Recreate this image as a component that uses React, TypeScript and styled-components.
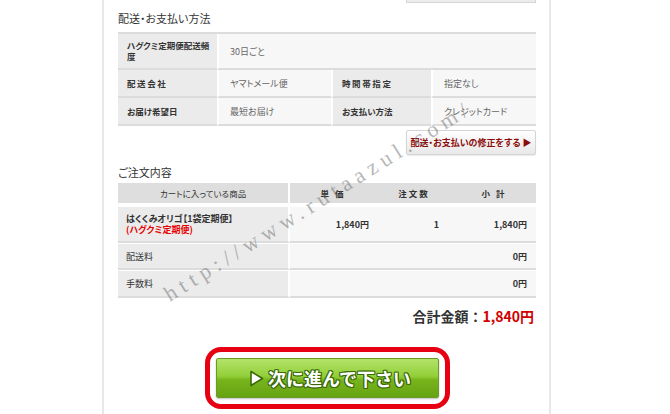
import styled, { createGlobalStyle } from 'styled-components';

const GlobalStyle = createGlobalStyle`
  html, body {
    margin: 0;
    padding: 0;
    background: #fff;
  }
  body {
    font-family: "Noto Sans CJK JP", "Noto Sans", sans-serif;
    color: #333;
    font-feature-settings: "palt";
  }
`;

const Page = styled.div`
  position: relative;
  width: 670px;
  height: 414px;
  overflow: hidden;
`;

const Panel = styled.div`
  box-sizing: border-box;
  margin-left: 102px;
  width: 449px;
  height: 100%;
  border-left: 2px solid #e8e8e8;
  border-right: 2px solid #e8e8e8;
  padding: 0 13px 0 14px;
  display: flex;
  flex-direction: column;
`;

const CutButton = styled.div`
  align-self: flex-end;
  box-sizing: border-box;
  width: 130px;
  height: 3px;
  background: #ececec;
  border: 1px solid #d6d6d6;
  border-top: none;
`;

const SectionTitle = styled.h2`
  margin: 8px 0 7px;
  font-size: 11px;
  line-height: 14px;
  font-weight: normal;
  color: #333;
`;

const InfoGrid = styled.div`
  display: grid;
  grid-template-columns: 99px 114px 100px 105px;
  grid-template-rows: 36px 28px 28px;
  border-top: 2px solid #dcdcdc;
`;

const Cell = styled.div<{ $label?: boolean; $span?: number; $first?: boolean }>`
  box-sizing: border-box;
  grid-column: ${({ $span }) => ($span ? `span ${$span}` : 'auto')};
  display: flex;
  align-items: center;
  padding: 0 6px 0 ${({ $label }) => ($label ? '9px' : '11px')};
  background: ${({ $label }) => ($label ? '#ebebeb' : '#f7f7f7')};
  border-bottom: 2px solid #dcdcdc;
  border-left: ${({ $first }) => ($first ? 'none' : '2px solid #fff')};
  font-size: ${({ $label }) => ($label ? '8.5px' : '9px')};
  font-weight: ${({ $label }) => ($label ? 'bold' : 'normal')};
  color: ${({ $label }) => ($label ? '#333' : '#666')};
  line-height: 11px;
`;

const Spaced = styled.span`
  letter-spacing: 1.6px;
`;

const NoWrap = styled.span`
  white-space: nowrap;
`;

const FixButton = styled.button`
  align-self: flex-end;
  box-sizing: border-box;
  margin-top: 4px;
  width: 130px;
  height: 25px;
  padding: 0;
  border: 1px solid #d4d4d4;
  border-radius: 2px;
  background: linear-gradient(#ffffff, #e8e8e8);
  box-shadow: 0 1px 1px rgba(0, 0, 0, 0.08);
  font-family: inherit;
  font-feature-settings: "palt";
  font-size: 9px;
  font-weight: bold;
  color: #8c0c0c;
  cursor: pointer;
`;

const OrderTitle = styled(SectionTitle)`
  margin: 10px 0 4px;
`;

const OrderGrid = styled.div`
  display: grid;
  grid-template-columns: 172px 86px 76px 84px;
  grid-template-rows: 23px 37px 27px 28px;
`;

const HeadCell = styled.div<{ $first?: boolean; $bold?: boolean }>`
  box-sizing: border-box;
  display: flex;
  align-items: center;
  justify-content: center;
  background: #dedede;
  border-bottom: 3px solid #fff;
  border-right: ${({ $first }) => ($first ? '2px solid #fff' : 'none')};
  font-size: 8.5px;
  font-weight: ${({ $bold }) => ($bold ? 'bold' : 'normal')};
  letter-spacing: ${({ $bold }) => ($bold ? '2px' : '0')};
  color: #333;
`;

const BodyCell = styled.div<{ $label?: boolean; $span?: number; $pr?: number }>`
  box-sizing: border-box;
  grid-column: ${({ $span }) => ($span ? `span ${$span}` : 'auto')};
  display: flex;
  flex-direction: column;
  justify-content: center;
  align-items: ${({ $label }) => ($label ? 'flex-start' : 'flex-end')};
  padding: 0 ${({ $pr }) => $pr ?? 9}px 0 8px;
  background: ${({ $label }) => ($label ? '#ebebeb' : '#f7f7f7')};
  border-top: 1px solid #fff;
  border-bottom: 2px solid #dcdcdc;
  border-right: ${({ $label }) => ($label ? '2px solid #fff' : 'none')};
  font-size: 9px;
  line-height: 11px;
  font-weight: bold;
  color: #333;
`;

const PlainLabel = styled.span`
  font-weight: normal;
`;

const RedNote = styled.span`
  color: #e60000;
`;

const Total = styled.div`
  align-self: flex-end;
  margin: 8px 2px 0 0;
  font-size: 14px;
  line-height: 20px;
  font-weight: bold;
  font-feature-settings: normal;
  color: #333;
`;

const TotalPrice = styled.span`
  color: #d10000;
`;

const Highlight = styled.div`
  align-self: center;
  margin-top: 21px;
  padding: 6px;
  border: 5px solid #e60012;
  border-radius: 16px;
`;

const NextButton = styled.button`
  box-sizing: border-box;
  width: 223px;
  height: 40px;
  display: flex;
  align-items: center;
  justify-content: center;
  gap: 4px;
  padding: 0 0 0 6px;
  border: 1px solid #6b9a28;
  border-radius: 2px;
  background: linear-gradient(#b3e36a 0%, #93cf3a 45%, #77b41c 55%, #66a312 100%);
  box-shadow: 0 1px 2px rgba(0, 0, 0, 0.25);
  font-family: inherit;
  font-feature-settings: normal;
  font-size: 18px;
  font-weight: bold;
  color: #fff;
  text-shadow: 1px 0 0 #3a6a08, -1px 0 0 #3a6a08, 0 1px 0 #3a6a08, 0 -1px 0 #3a6a08,
    1px 1px 0 #3a6a08, -1px -1px 0 #3a6a08, 1px -1px 0 #3a6a08, -1px 1px 0 #3a6a08;
  cursor: pointer;
`;

const Watermark = styled.span`
  position: absolute;
  left: 170px;
  top: 284px;
  font-family: "Liberation Serif", serif;
  font-size: 22px;
  line-height: 22px;
  letter-spacing: 5.6px;
  white-space: nowrap;
  color: rgba(110, 110, 110, 0.5);
  transform-origin: 0 18.5px;
  transform: rotate(-32deg);
  pointer-events: none;
`;

const PlayIcon = () => (
  <svg width="15" height="17" viewBox="0 0 15 17">
    <path d="M2 1.5 L13.5 8.5 L2 15.5 Z" fill="#fff" stroke="#3a6a08" strokeWidth="1.6" strokeLinejoin="round" />
  </svg>
);

export default function App() {
  return (
    <Page>
      <GlobalStyle />
      <Panel>
        <CutButton />
        <SectionTitle>配送・お支払い方法</SectionTitle>
        <InfoGrid>
          <Cell $label $first>
            <span>
              <NoWrap>ハグクミ定期便配送頻</NoWrap>
              <br />度
            </span>
          </Cell>
          <Cell $span={3}>30日ごと</Cell>

          <Cell $label $first>
            <Spaced>配送会社</Spaced>
          </Cell>
          <Cell>ヤマトメール便</Cell>
          <Cell $label>
            <Spaced>時間帯指定</Spaced>
          </Cell>
          <Cell>指定なし</Cell>

          <Cell $label $first>お届け希望日</Cell>
          <Cell>最短お届け</Cell>
          <Cell $label>お支払い方法</Cell>
          <Cell>クレジットカード</Cell>
        </InfoGrid>
        <FixButton>配送・お支払いの修正をする ▶</FixButton>

        <OrderTitle>ご注文内容</OrderTitle>
        <OrderGrid>
          <HeadCell $first>カートに入っている商品</HeadCell>
          <HeadCell $bold>単 価</HeadCell>
          <HeadCell $bold>注文数</HeadCell>
          <HeadCell $bold>小 計</HeadCell>

          <BodyCell $label>
            <span>はくくみオリゴ【1袋定期便】</span>
            <RedNote>(ハグクミ定期便)</RedNote>
          </BodyCell>
          <BodyCell $pr={7}>1,840円</BodyCell>
          <BodyCell $pr={13}>1</BodyCell>
          <BodyCell>1,840円</BodyCell>

          <BodyCell $label>
            <PlainLabel>配送料</PlainLabel>
          </BodyCell>
          <BodyCell $span={3}>0円</BodyCell>

          <BodyCell $label>
            <PlainLabel>手数料</PlainLabel>
          </BodyCell>
          <BodyCell $span={3}>0円</BodyCell>
        </OrderGrid>

        <Total>
          合計金額：<TotalPrice>1,840円</TotalPrice>
        </Total>

        <Highlight>
          <NextButton>
            <PlayIcon />
            次に進んで下さい
          </NextButton>
        </Highlight>
      </Panel>
      <Watermark>http://www.rutaazul.com/</Watermark>
    </Page>
  );
}
